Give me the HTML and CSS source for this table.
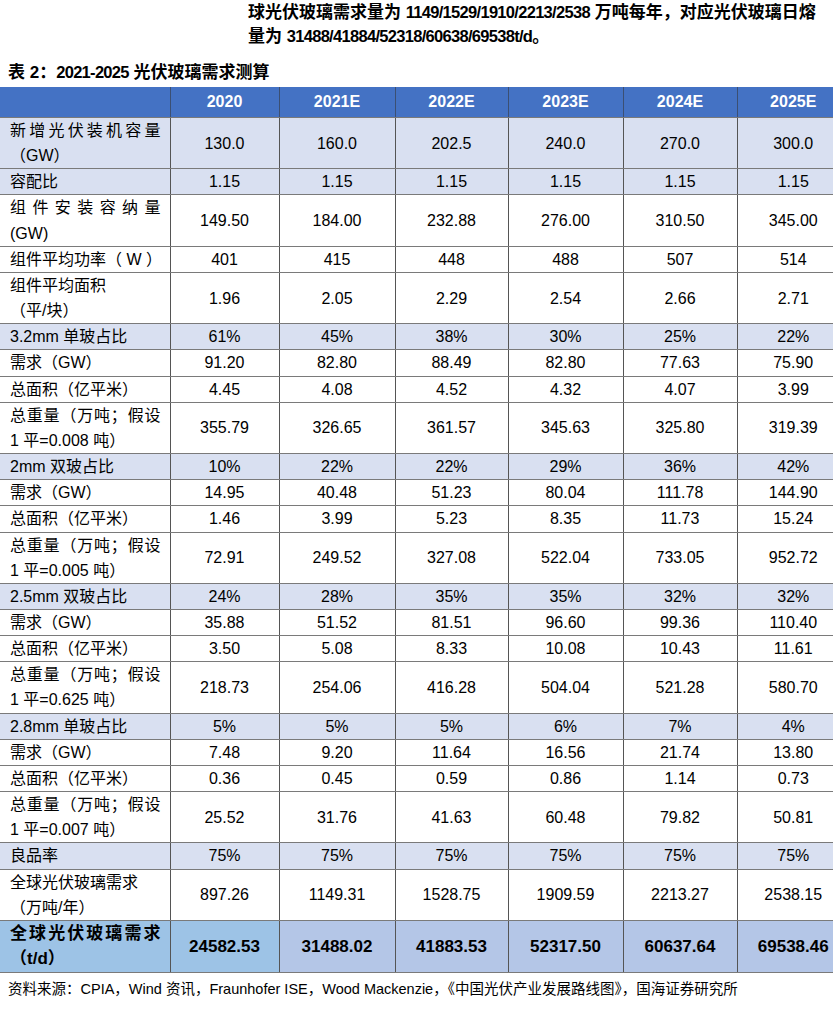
FILE: index.html
```html
<!DOCTYPE html>
<html lang="zh-CN">
<head>
<meta charset="utf-8">
<title>2021-2025 光伏玻璃需求测算</title>
<link rel="stylesheet" href="styles.css">
</head>
<body>
<div class="page">
  <p class="intro">球光伏玻璃需求量为 <span class="num">1149/1529/1910/2213/2538</span> 万吨每年，对应光伏玻璃日熔<br>量为 <span class="num">31488/41884/52318/60638/69538t/d</span>。</p>
  <p class="caption">表 2：<span class="num">2021-2025</span> 光伏玻璃需求测算</p>
  <table class="data">
    <colgroup>
      <col class="c-label"><col class="c-a"><col class="c-b"><col class="c-c"><col class="c-d"><col class="c-e"><col class="c-f">
    </colgroup>
    <thead>
      <tr class="head"><th></th><th>2020</th><th>2021E</th><th>2022E</th><th>2023E</th><th>2024E</th><th>2025E</th></tr>
    </thead>
    <tbody>
      <tr class="shade"><td class="label"><span class="jl">新增光伏装机容量</span>（GW）</td><td>130.0</td><td>160.0</td><td>202.5</td><td>240.0</td><td>270.0</td><td>300.0</td></tr>
      <tr class="shade"><td class="label">容配比</td><td>1.15</td><td>1.15</td><td>1.15</td><td>1.15</td><td>1.15</td><td>1.15</td></tr>
      <tr><td class="label"><span class="jl">组件安装容纳量</span>(GW)</td><td>149.50</td><td>184.00</td><td>232.88</td><td>276.00</td><td>310.50</td><td>345.00</td></tr>
      <tr><td class="label">组件平均功率（ W ）</td><td>401</td><td>415</td><td>448</td><td>488</td><td>507</td><td>514</td></tr>
      <tr><td class="label"><span class="line">组件平均面积</span>（平/块）</td><td>1.96</td><td>2.05</td><td>2.29</td><td>2.54</td><td>2.66</td><td>2.71</td></tr>
      <tr class="shade"><td class="label">3.2mm 单玻占比</td><td>61%</td><td>45%</td><td>38%</td><td>30%</td><td>25%</td><td>22%</td></tr>
      <tr><td class="label">需求（GW）</td><td>91.20</td><td>82.80</td><td>88.49</td><td>82.80</td><td>77.63</td><td>75.90</td></tr>
      <tr><td class="label">总面积（亿平米）</td><td>4.45</td><td>4.08</td><td>4.52</td><td>4.32</td><td>4.07</td><td>3.99</td></tr>
      <tr><td class="label"><span class="jl">总重量（万吨；假设</span>1 平=0.008 吨）</td><td>355.79</td><td>326.65</td><td>361.57</td><td>345.63</td><td>325.80</td><td>319.39</td></tr>
      <tr class="shade"><td class="label">2mm 双玻占比</td><td>10%</td><td>22%</td><td>22%</td><td>29%</td><td>36%</td><td>42%</td></tr>
      <tr><td class="label">需求（GW）</td><td>14.95</td><td>40.48</td><td>51.23</td><td>80.04</td><td>111.78</td><td>144.90</td></tr>
      <tr><td class="label">总面积（亿平米）</td><td>1.46</td><td>3.99</td><td>5.23</td><td>8.35</td><td>11.73</td><td>15.24</td></tr>
      <tr><td class="label"><span class="jl">总重量（万吨；假设</span>1 平=0.005 吨）</td><td>72.91</td><td>249.52</td><td>327.08</td><td>522.04</td><td>733.05</td><td>952.72</td></tr>
      <tr class="shade"><td class="label">2.5mm 双玻占比</td><td>24%</td><td>28%</td><td>35%</td><td>35%</td><td>32%</td><td>32%</td></tr>
      <tr><td class="label">需求（GW）</td><td>35.88</td><td>51.52</td><td>81.51</td><td>96.60</td><td>99.36</td><td>110.40</td></tr>
      <tr><td class="label">总面积（亿平米）</td><td>3.50</td><td>5.08</td><td>8.33</td><td>10.08</td><td>10.43</td><td>11.61</td></tr>
      <tr><td class="label"><span class="jl">总重量（万吨；假设</span>1 平=0.625 吨）</td><td>218.73</td><td>254.06</td><td>416.28</td><td>504.04</td><td>521.28</td><td>580.70</td></tr>
      <tr class="shade"><td class="label">2.8mm 单玻占比</td><td>5%</td><td>5%</td><td>5%</td><td>6%</td><td>7%</td><td>4%</td></tr>
      <tr><td class="label">需求（GW）</td><td>7.48</td><td>9.20</td><td>11.64</td><td>16.56</td><td>21.74</td><td>13.80</td></tr>
      <tr><td class="label">总面积（亿平米）</td><td>0.36</td><td>0.45</td><td>0.59</td><td>0.86</td><td>1.14</td><td>0.73</td></tr>
      <tr><td class="label"><span class="jl">总重量（万吨；假设</span>1 平=0.007 吨）</td><td>25.52</td><td>31.76</td><td>41.63</td><td>60.48</td><td>79.82</td><td>50.81</td></tr>
      <tr class="shade"><td class="label">良品率</td><td>75%</td><td>75%</td><td>75%</td><td>75%</td><td>75%</td><td>75%</td></tr>
      <tr><td class="label"><span class="line">全球光伏玻璃需求</span>（万吨/年）</td><td>897.26</td><td>1149.31</td><td>1528.75</td><td>1909.59</td><td>2213.27</td><td>2538.15</td></tr>
      <tr class="total"><td class="label"><span class="jl">全球光伏玻璃需求</span>（t/d）</td><td class="first">24582.53</td><td>31488.02</td><td>41883.53</td><td>52317.50</td><td>60637.64</td><td>69538.46</td></tr>
    </tbody>
  </table>
  <p class="source">资料来源：CPIA，Wind 资讯，Fraunhofer ISE，Wood Mackenzie，《中国光伏产业发展路线图》，国海证券研究所</p>
</div>
</body>
</html>
```
FILE: styles.css
```css
html, body {
  margin: 0;
  padding: 0;
  background: #ffffff;
}

body {
  width: 833px;
  height: 1016px;
  overflow: hidden;
  font-family: "Liberation Sans", "Noto Sans CJK SC", sans-serif;
  color: #000000;
}

.page {
  width: 833px;
}

.intro {
  margin: 0 0 0 248px;
  padding-top: 1px;
  height: 48px;
  font-size: 17px;
  font-weight: bold;
  line-height: 24px;
  white-space: nowrap;
}

.num {
  line-height: 1;
}

.intro .num {
  font-size: 16.5px;
  letter-spacing: -0.7px;
}

.caption {
  margin: 12px 0 2px 8px;
  height: 24px;
  font-size: 17px;
  font-weight: bold;
  line-height: 24px;
}

.caption .num {
  font-size: 16.5px;
  letter-spacing: -0.7px;
}

.data {
  border-collapse: collapse;
  table-layout: fixed;
  width: 849px;
  font-size: 16px;
}

.c-label { width: 170px; }
.c-a { width: 109px; }
.c-b { width: 116px; }
.c-c { width: 113px; }
.c-d { width: 115px; }
.c-e { width: 114px; }
.c-f { width: 112px; }

.data th,
.data td {
  padding: 0;
  text-align: center;
  vertical-align: middle;
  border-left: 1px solid #555555;
  border-bottom: 1px solid #7a7a7a;
  line-height: 25.15px;
}

.data th:first-child,
.data td:first-child {
  border-left: none;
}

.head th {
  height: 30px;
  background: #4472c4;
  color: #ffffff;
  font-weight: bold;
  font-size: 16px;
  line-height: 30px;
  border-left-color: #3b4f73;
}

.data td.label {
  text-align: left;
  padding: 0 9px 0 10px;
}

.jl {
  display: block;
  text-align: justify;
  text-align-last: justify;
}

.line {
  display: block;
}

.shade td {
  background: #d9e0f1;
}

.total td {
  background: #b4c6e7;
  font-weight: bold;
  font-size: 17px;
  line-height: 25.6px;
}

.total td.label,
.total td.first {
  background: #9dc3e6;
}

.source {
  margin: 6px 0 0 8px;
  font-size: 14.5px;
  line-height: 20px;
  white-space: nowrap;
}
```
